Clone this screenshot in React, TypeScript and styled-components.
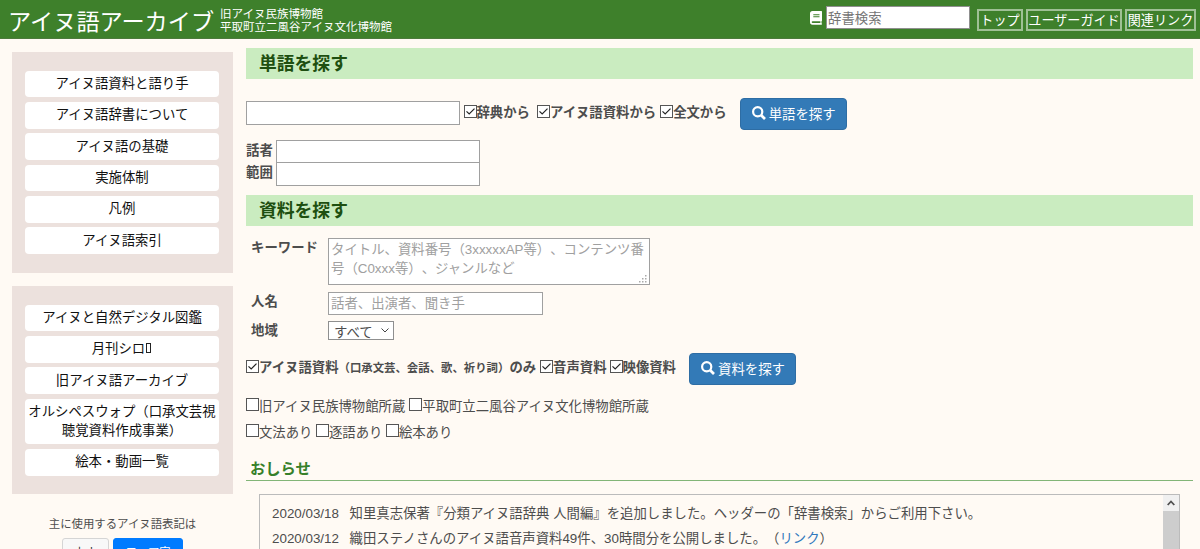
import React from 'react';
import styled, { createGlobalStyle } from 'styled-components';

const Global = createGlobalStyle`
  * { box-sizing: border-box; }
  html, body { margin: 0; padding: 0; height: 549px; overflow: hidden; background: #fffaf4; }
  body, input, textarea, button {
    font-family: "Liberation Sans", "Noto Sans CJK JP", sans-serif;
    font-size: 13.38px;
    color: #4d4d4d;
    text-spacing-trim: space-all;
  }
`;

const Page = styled.div`
  height: 549px;
  overflow: hidden;
`;

const Header = styled.header`
  display: flex;
  align-items: flex-start;
  height: 39px;
  padding: 0 4px 0 8px;
  background: #3e802b;
  border-bottom: 1px solid #4c7b3c;
  color: #fff;
`;

const SiteTitle = styled.div`
  width: 212px;
  padding-top: 7px;
  font-size: 23.2px;
  line-height: 30px;
  white-space: nowrap;
`;

const Museums = styled.div`
  padding-top: 8px;
  font-size: 11.5px;
  line-height: 13px;
  white-space: nowrap;
`;

const DictSearch = styled.div`
  display: flex;
  align-items: flex-start;
  gap: 4px;
  margin-left: auto;
  padding-top: 6px;
  svg { margin-top: 5px; }
`;

const DictInput = styled.input`
  width: 144px;
  height: 23px;
  padding: 1px 1px 0;
  border: 1px solid #8f8f8f;
  background: #fff;
  &::placeholder { color: #757575; opacity: 1; }
`;

const Nav = styled.nav`
  display: flex;
  gap: 3px;
  padding: 9px 0 0 7px;
`;

const NavLink = styled.a<{ $w: number }>`
  display: flex;
  justify-content: center;
  width: ${(p) => p.$w}px;
  height: 22px;
  border: 2px solid #9fc095;
  font-size: 13.1px;
  line-height: 19px;
  white-space: nowrap;
  color: #fff;
`;

const Body = styled.div`
  display: flex;
  padding-left: 12px;
`;

const Sidebar = styled.aside`
  width: 221px;
  padding-top: 13px;
`;

const Panel = styled.div<{ $h: number }>`
  display: flex;
  flex-direction: column;
  gap: 4.7px;
  height: ${(p) => p.$h}px;
  margin-bottom: 13.5px;
  padding: 18.5px 14px 0 13px;
  background: #ece1dd;
`;

const MenuItem = styled.a`
  padding: 4.4px 0 3.4px;
  border-radius: 4px;
  background: #fff;
  color: #111;
  line-height: 18.9px;
  text-align: center;
`;

const MissingGlyph = styled.span`
  display: inline-block;
  width: 5px;
  height: 10px;
  margin: 0 1px;
  border: 1px solid #222;
`;

const Notation = styled.div`
  padding-top: 8px;
  font-size: 11.4px;
  line-height: 18px;
  text-align: center;
`;

const NotationButtons = styled.div`
  display: flex;
  justify-content: center;
  gap: 4px;
  padding-top: 5px;
`;

const NotationButton = styled.button<{ $on?: boolean }>`
  width: ${(p) => (p.$on ? 70 : 47)}px;
  height: 26px;
  padding: 0;
  border: 1px solid ${(p) => (p.$on ? '#007bff' : '#d5d5d5')};
  border-radius: 3px;
  background: ${(p) => (p.$on ? '#007bff' : '#f8f8f8')};
  color: ${(p) => (p.$on ? '#fff' : '#333')};
  font-size: 11.3px;
`;

const Main = styled.main`
  width: 947px;
  margin-left: 13px;
  padding-top: 9px;
`;

const SectionTitle = styled.h2`
  height: 31px;
  margin: 0;
  padding-left: 13px;
  background: #caecc0;
  color: #1e4f10;
  font-size: 17.8px;
  font-weight: bold;
  line-height: 32px;
`;

const WordRow = styled.div`
  display: flex;
  align-items: flex-start;
  height: 61px;
  padding-top: 19px;
`;

const Group = styled.div<{ $top: number }>`
  display: flex;
  padding-top: ${(p) => p.$top}px;
`;

const TextInput = styled.input<{ $w: number; $h?: number }>`
  width: ${(p) => p.$w}px;
  height: ${(p) => p.$h ?? 24}px;
  padding: 0 2px;
  border: 1px solid #a0a0a0;
  background: #fff;
  &::placeholder { color: #a0a0a0; opacity: 1; }
`;

const CheckLabel = styled.label<{ $bold?: boolean; $ml?: number }>`
  display: flex;
  align-items: flex-start;
  height: 18px;
  margin-left: ${(p) => p.$ml ?? 0}px;
  font-size: 13.36px;
  font-weight: ${(p) => (p.$bold ? 'bold' : 'normal')};
  line-height: ${(p) => (p.$bold ? 18 : 20)}px;
  white-space: nowrap;
  small { font-size: 11.4px; }
`;

const Box = styled.span`
  flex: none;
  display: flex;
  width: 13px;
  height: 13px;
  margin-top: 1px;
  border: 1px solid #555;
  background: #fff;
`;

const SearchButton = styled.button`
  display: flex;
  align-items: center;
  justify-content: center;
  gap: 3px;
  width: 107px;
  height: 32px;
  margin: 0 0 0 13px;
  padding: 0 0 2px 1px;
  border: 1px solid #2e6da4;
  border-radius: 4px;
  background: #337ab7;
  color: #fff;
  white-space: nowrap;
`;

const Speakers = styled.div`
  display: flex;
  flex-direction: column;
  height: 55px;
`;

const SpeakerRow = styled.div`
  display: flex;
  height: 22px;
  font-weight: bold;
  line-height: 22px;
  span { width: 30px; }
`;

const Fields = styled.div`
  padding-top: 12px;
`;

const Field = styled.div<{ $h: number }>`
  display: flex;
  align-items: flex-start;
  height: ${(p) => p.$h}px;
`;

const FieldLabel = styled.div`
  width: 82px;
  padding-left: 5px;
  font-weight: bold;
  line-height: 20px;
`;

const Keyword = styled.div`
  display: flex;
  justify-content: space-between;
  align-items: flex-end;
  width: 322px;
  height: 47px;
  padding: 0 2px 1px;
  border: 1px solid #a0a0a0;
  background: #fff;
  color: #a0a0a0;
  p { flex: none; width: 313px; margin: 0; height: 43px; line-height: 19px; white-space: nowrap; }
  svg { flex: none; margin-left: -5px; }
`;

const Select = styled.div`
  display: flex;
  align-items: center;
  justify-content: space-between;
  width: 66px;
  height: 19px;
  padding: 0 4px 0 5px;
  border: 1px solid #8f8f8f;
  background: #fff;
`;

const CheckRow = styled.div<{ $h: number }>`
  display: flex;
  align-items: flex-start;
  height: ${(p) => p.$h}px;
`;

const NewsTitle = styled.h3`
  height: 25px;
  margin: 0 0 13px;
  padding-left: 4px;
  border-bottom: 1px solid #82b577;
  color: #37802a;
  font-size: 15.3px;
  font-weight: bold;
  line-height: 25px;
`;

const NewsBox = styled.div`
  display: flex;
  justify-content: space-between;
  height: 90px;
  margin: 0 13px;
  border: 1px solid #bbb;
`;

const NewsList = styled.div`
  padding: 7px 0 0 12px;
`;

const NewsItem = styled.div`
  display: flex;
  height: 24.6px;
  line-height: 24px;
  white-space: nowrap;
  time { width: 77.5px; }
  a { color: #2f78bd; }
`;

const Scrollbar = styled.div`
  width: 16px;
  background: #cdcdcd;
`;

const ScrollUp = styled.div`
  display: flex;
  align-items: center;
  justify-content: center;
  height: 16px;
  background: #f0f0f0;
`;

const BookIcon = () => (
  <svg width="12" height="14" viewBox="0 0 12 14">
    <path
      fill="#fff"
      fillRule="evenodd"
      d="M2.5 0H11.4Q12 0 12 .7V9.4Q12 10 11.5 10.2V12.3Q12 12.4 12 13T11.4 13.7H2.5Q0 13.7 0 11V2.6Q0 0 2.5 0ZM3.3 3.3V4.2H9.5V3.3ZM3.3 5.3V6.2H9.5V5.3ZM2.6 10.2Q1.7 10.3 1.7 11.1T2.6 12H10.4V10.2Z"
    />
  </svg>
);

const SearchIcon = () => (
  <svg width="14" height="14" viewBox="0 0 14 14" fill="none" stroke="#fff">
    <circle cx="5.7" cy="5.7" r="4.6" strokeWidth="2.2" />
    <path d="M9.2 9.2 13 13" strokeWidth="2.7" />
  </svg>
);

const Check = ({ on, children, ml, bold }: { on?: boolean; children: React.ReactNode; ml?: number; bold?: boolean }) => (
  <CheckLabel $ml={ml} $bold={bold}>
    <Box>
      {on && (
        <svg width="11" height="11" viewBox="0 0 11 11">
          <path d="M1.5 5.3 4.2 8 9.5 2.7" fill="none" stroke="#222" strokeWidth="1.2" />
        </svg>
      )}
    </Box>
    <span>{children}</span>
  </CheckLabel>
);

const guideMenu = ['アイヌ語資料と語り手', 'アイヌ語辞書について', 'アイヌ語の基礎', '実施体制', '凡例', 'アイヌ語索引'];

export default function App() {
  return (
    <Page lang="ja">
      <Global />
      <Header>
        <SiteTitle>アイヌ語アーカイブ</SiteTitle>
        <Museums>
          旧アイヌ民族博物館
          <br />
          平取町立二風谷アイヌ文化博物館
        </Museums>
        <DictSearch>
          <BookIcon />
          <DictInput placeholder="辞書検索" />
        </DictSearch>
        <Nav>
          <NavLink $w={46}>トップ</NavLink>
          <NavLink $w={96}>ユーザーガイド</NavLink>
          <NavLink $w={71}>関連リンク</NavLink>
        </Nav>
      </Header>
      <Body>
        <Sidebar>
          <Panel $h={220.5}>
            {guideMenu.map((t) => (
              <MenuItem key={t}>{t}</MenuItem>
            ))}
          </Panel>
          <Panel $h={207.5}>
            <MenuItem>アイヌと自然デジタル図鑑</MenuItem>
            <MenuItem>
              月刊シロ
              <MissingGlyph />
            </MenuItem>
            <MenuItem>旧アイヌ語アーカイブ</MenuItem>
            <MenuItem>
              オルシペスウォプ（口承文芸視
              <br />
              聴覚資料作成事業）
            </MenuItem>
            <MenuItem>絵本・動画一覧</MenuItem>
          </Panel>
          <Notation>
            主に使用するアイヌ語表記は
            <NotationButtons>
              <NotationButton>カナ</NotationButton>
              <NotationButton $on>ローマ字</NotationButton>
            </NotationButtons>
          </Notation>
        </Sidebar>
        <Main>
          <SectionTitle>単語を探す</SectionTitle>
          <WordRow>
            <Group $top={3}>
              <TextInput $w={214} />
            </Group>
            <Group $top={6}>
              <Check on bold ml={3.5}>辞典から</Check>
              <Check on bold ml={7}>アイヌ語資料から</Check>
              <Check on bold ml={4}>全文から</Check>
            </Group>
            <SearchButton>
              <SearchIcon />
              単語を探す
            </SearchButton>
          </WordRow>
          <Speakers>
            <SpeakerRow>
              <span>話者</span>
              <TextInput $w={204} $h={23} />
            </SpeakerRow>
            <SpeakerRow>
              <span>範囲</span>
              <TextInput $w={204} />
            </SpeakerRow>
          </Speakers>
          <SectionTitle>資料を探す</SectionTitle>
          <Fields>
            <Field $h={54}>
              <FieldLabel>キーワード</FieldLabel>
              <Keyword>
                <p>
                  タイトル、資料番号（3xxxxxAP等）、コンテンツ番
                  <br />
                  号（C0xxx等）、ジャンルなど
                </p>
                <svg width="8" height="8" viewBox="0 0 8 8" fill="#aaa">
                  <path d="M6 0h1.5v1.5H6zM3 3h1.5v1.5H3zM6 3h1.5v1.5H6zM0 6h1.5v1.5H0zM3 6h1.5v1.5H3zM6 6h1.5v1.5H6z" />
                </svg>
              </Keyword>
            </Field>
            <Field $h={29}>
              <FieldLabel>人名</FieldLabel>
              <TextInput $w={215} $h={23} placeholder="話者、出演者、聞き手" />
            </Field>
            <Field $h={32}>
              <FieldLabel>地域</FieldLabel>
              <Select>
                すべて
                <svg width="8" height="5" viewBox="0 0 8 5">
                  <path d="M.5.5 4 4 7.5.5" fill="none" stroke="#444" />
                </svg>
              </Select>
            </Field>
          </Fields>
          <CheckRow $h={44}>
            <Group $top={6}>
              <Check on bold>
                アイヌ語資料<small>（口承文芸、会話、歌、祈り詞）</small>のみ
              </Check>
              <Check on bold ml={4}>音声資料</Check>
              <Check on bold ml={3}>映像資料</Check>
            </Group>
            <SearchButton>
              <SearchIcon />
              資料を探す
            </SearchButton>
          </CheckRow>
          <CheckRow $h={26}>
            <Check>旧アイヌ民族博物館所蔵</Check>
            <Check ml={4}>平取町立二風谷アイヌ文化博物館所蔵</Check>
          </CheckRow>
          <CheckRow $h={33}>
            <Check>文法あり</Check>
            <Check ml={3.5}>逐語あり</Check>
            <Check ml={3.5}>絵本あり</Check>
          </CheckRow>
          <NewsTitle>おしらせ</NewsTitle>
          <NewsBox>
            <NewsList>
              <NewsItem>
                <time>2020/03/18</time>
                <span>知里真志保著『分類アイヌ語辞典 人間編』を追加しました。ヘッダーの「辞書検索」からご利用下さい。</span>
              </NewsItem>
              <NewsItem>
                <time>2020/03/12</time>
                <span>
                  織田ステノさんのアイヌ語音声資料49件、30時間分を公開しました。（<a>リンク</a>）
                </span>
              </NewsItem>
            </NewsList>
            <Scrollbar>
              <ScrollUp>
                <svg width="8" height="6" viewBox="0 0 8 6">
                  <path d="M.7 5 4 1.5 7.3 5" fill="none" stroke="#505050" strokeWidth="1.8" />
                </svg>
              </ScrollUp>
            </Scrollbar>
          </NewsBox>
        </Main>
      </Body>
    </Page>
  );
}
